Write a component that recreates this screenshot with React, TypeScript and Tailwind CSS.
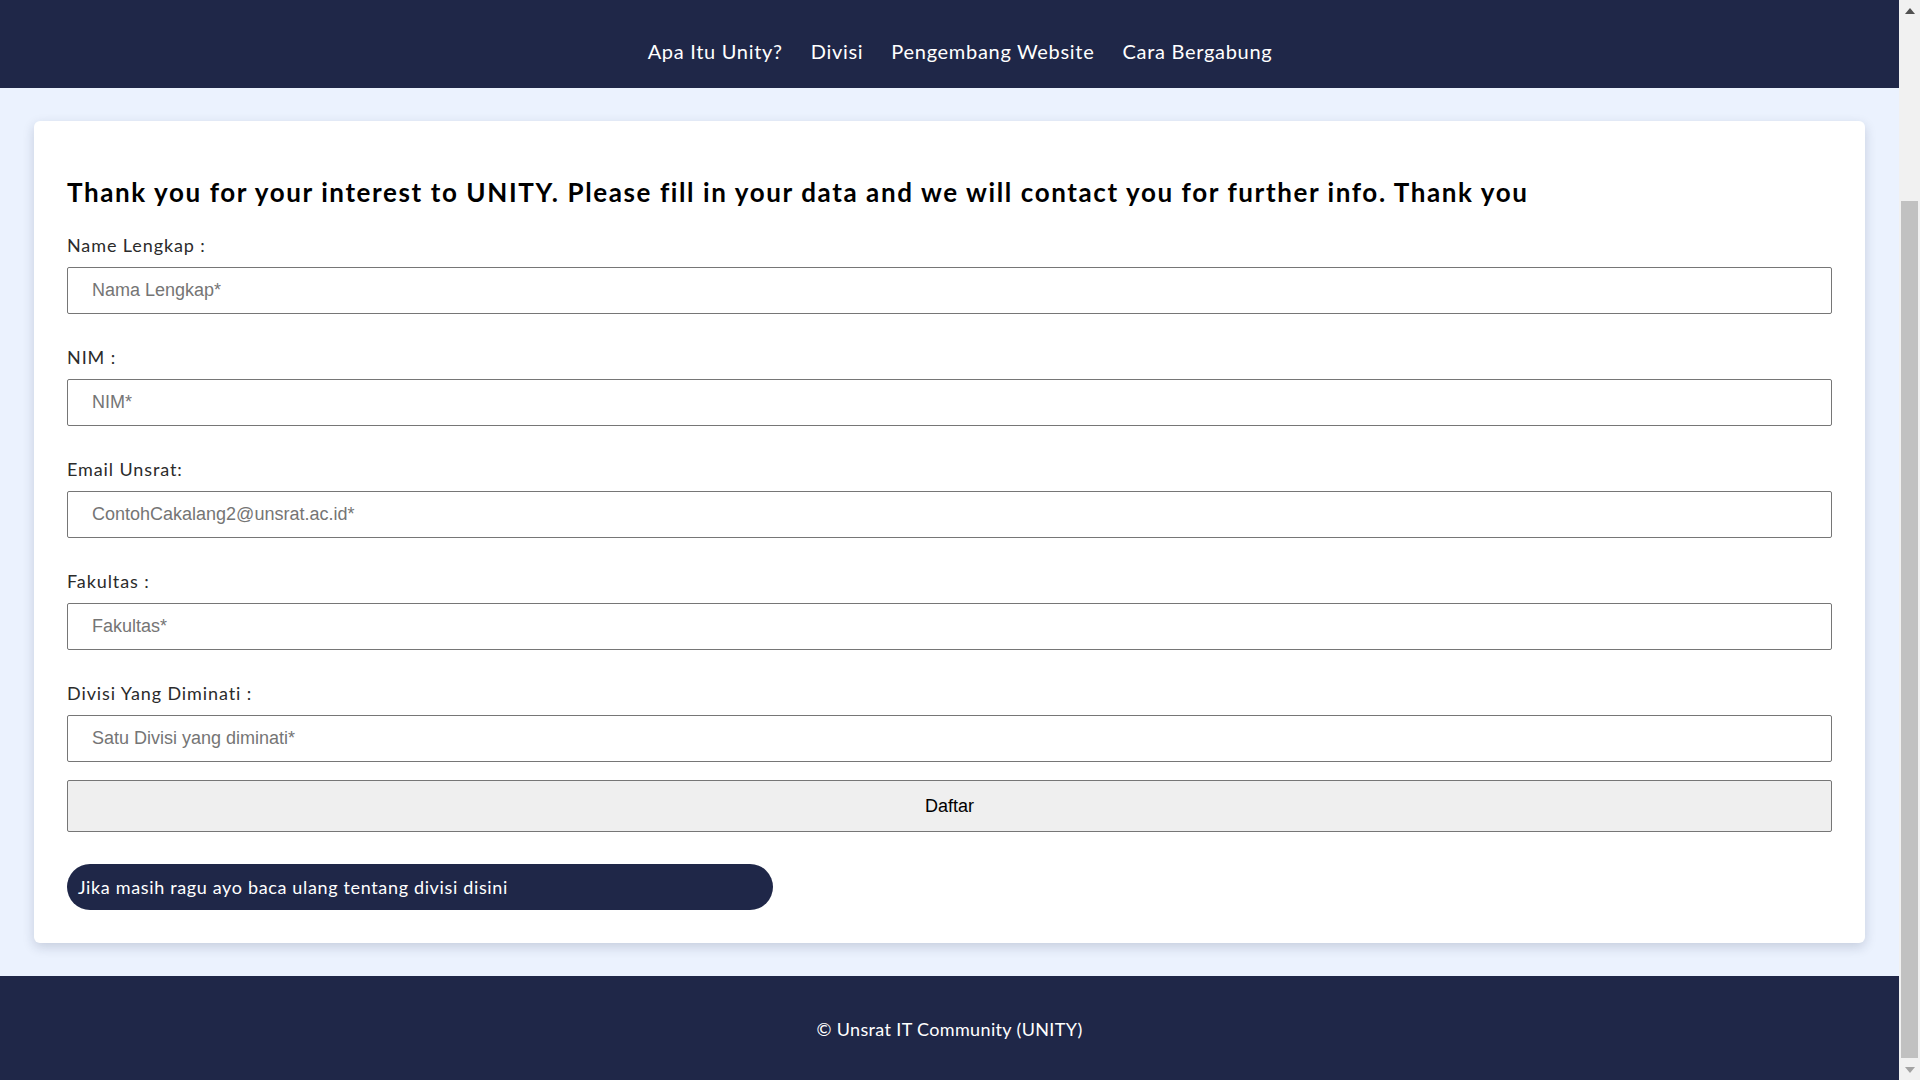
const navLinks = ["Apa Itu Unity?", "Divisi", "Pengembang Website", "Cara Bergabung"];

const fields = [
  { label: "Name Lengkap :", placeholder: "Nama Lengkap*" },
  { label: "NIM :", placeholder: "NIM*" },
  { label: "Email Unsrat:", placeholder: "ContohCakalang2@unsrat.ac.id*" },
  { label: "Fakultas :", placeholder: "Fakultas*" },
  { label: "Divisi Yang Diminati :", placeholder: "Satu Divisi yang diminati*" },
];

const roundFont = { fontFamily: "Lato, 'Noto Sans', sans-serif" };
const formFont = { fontFamily: "'Liberation Sans', Arial, sans-serif" };

function Scrollbar() {
  return (
    <div className="flex h-full w-[21px] shrink-0 flex-col bg-[#f1f1f1]">
      {/* up arrow */}
      <div className="flex h-[21px] items-center justify-center">
        <svg width="10" height="6" viewBox="0 0 10 6">
          <path d="M0 6 L5 0 L10 6 Z" fill="#505050" />
        </svg>
      </div>
      <div className="flex-1">
        <div className="mx-[2px] mt-[180px] h-[857px] bg-[#c1c1c1]" />
      </div>
      {/* down arrow */}
      <div className="flex h-[21px] items-center justify-center">
        <svg width="10" height="6" viewBox="0 0 10 6">
          <path d="M0 0 L10 0 L5 6 Z" fill="#a3a3a3" />
        </svg>
      </div>
    </div>
  );
}

export default function App() {
  return (
    <div className="flex h-screen w-full overflow-hidden">
      <div className="flex min-w-0 flex-1 flex-col bg-[#ebf2fe]" style={roundFont}>
        {/* Header */}
        <header className="flex h-[88px] shrink-0 items-center justify-center bg-[#1f2748] pl-[21px] pt-[14px]">
          <nav className="flex gap-7">
            {navLinks.map((link) => (
              <a key={link} href="#" className="text-[20px] leading-[28px] tracking-[0.7px] text-white">
                {link}
              </a>
            ))}
          </nav>
        </header>

        {/* Form card */}
        <main className="flex-1 px-[34px] pt-[33px]">
          <div className="h-[822px] rounded-[6px] bg-white px-[33px] pb-[34px] pt-[56px] shadow-[0_4px_12px_rgba(30,40,70,0.18)]">
            <h2 className="mb-[24px] text-[26px] font-bold leading-[31px] tracking-[1.6px] text-black">
              Thank you for your interest to UNITY. Please fill in your data and we will contact you for further info. Thank you
            </h2>

            <form>
              {fields.map((field, i) => (
                <div key={field.label} className={i < fields.length - 1 ? "mb-[30px]" : "mb-[18px]"}>
                  <label className="mb-[8px] block text-[18px] leading-[27px] tracking-[0.9px] text-[#2b2b2b]">
                    {field.label}
                  </label>
                  <input
                    type="text"
                    placeholder={field.placeholder}
                    className="block h-[47px] w-full rounded-[2px] border border-[#767676] bg-white pl-[24px] text-[18px] text-black outline-none placeholder:text-[#757575]"
                    style={formFont}
                  />
                </div>
              ))}

              <button
                type="button"
                className="block h-[52px] w-full rounded-[2px] border border-[#767676] bg-[#efefef] text-[18px] text-black"
                style={formFont}
              >
                Daftar
              </button>

              <a
                href="#"
                className="mt-[32px] flex h-[46px] w-[40%] items-center rounded-full bg-[#1f2748] pl-[11px] text-[18px] tracking-[0.65px] text-white"
              >
                Jika masih ragu ayo baca ulang tentang divisi disini
              </a>
            </form>
          </div>
        </main>

        {/* Footer */}
        <footer className="flex h-[104px] shrink-0 items-center justify-center bg-[#1f2748] pt-[2px]">
          <p className="text-[18px] tracking-[0.35px] text-white">© Unsrat IT Community (UNITY)</p>
        </footer>
      </div>
      <Scrollbar />
    </div>
  );
}
